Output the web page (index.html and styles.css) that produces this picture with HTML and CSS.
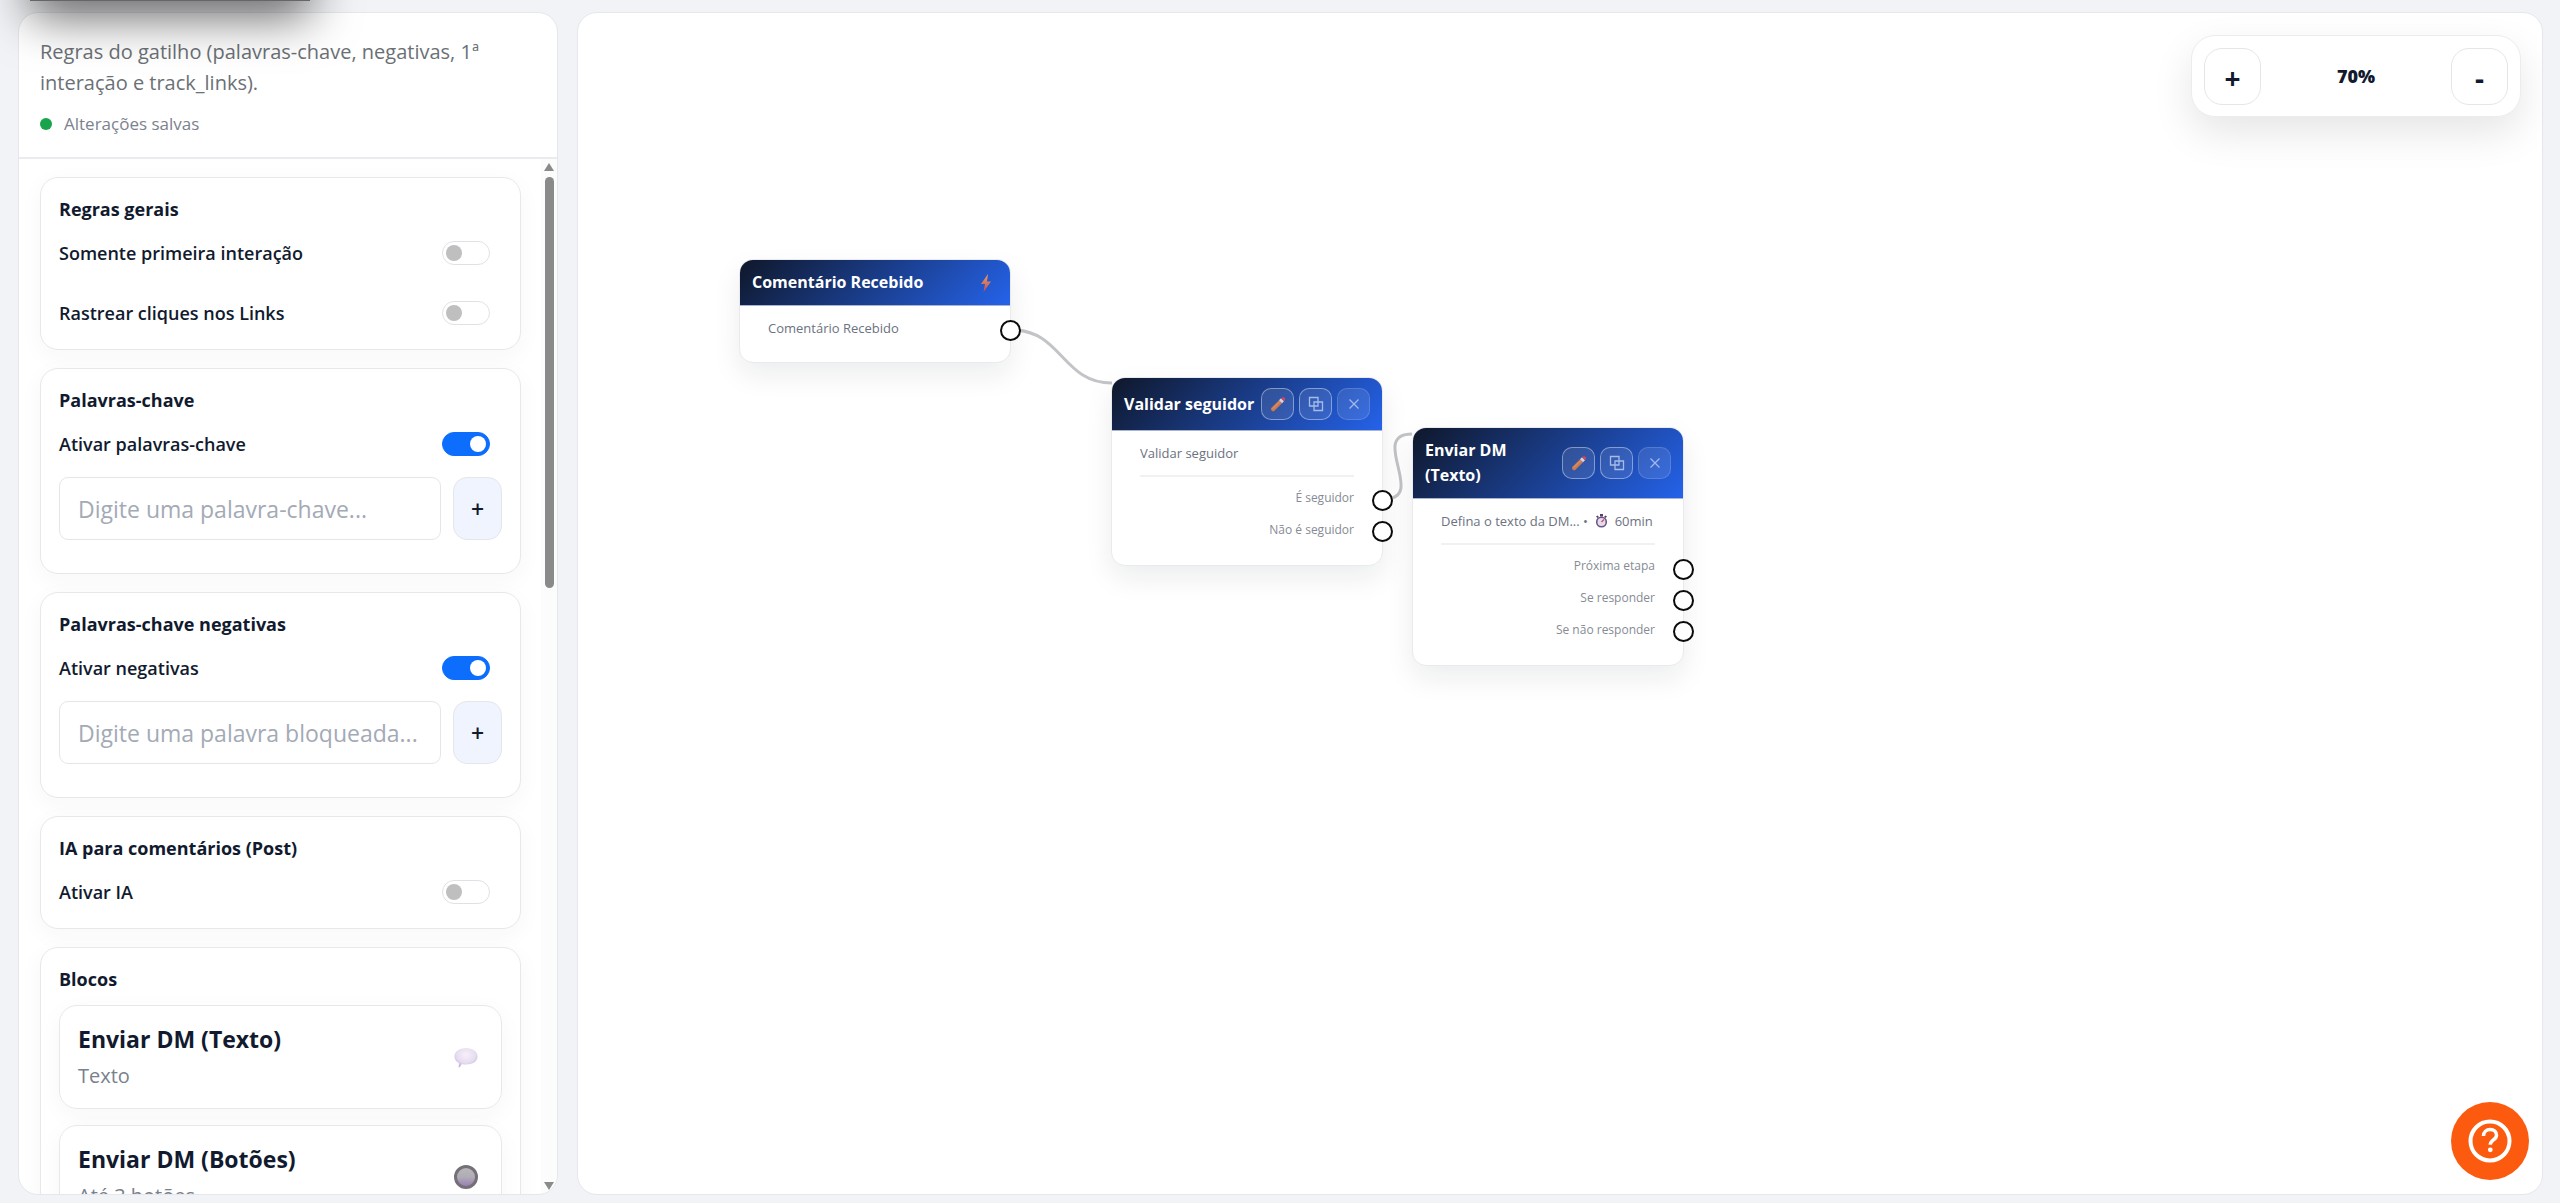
FILE: index.html
```html
<!DOCTYPE html>
<html lang="pt-BR">
<head>
<meta charset="utf-8">
<title>Editor de fluxo</title>
<link rel="stylesheet" href="styles.css">
</head>
<body>
<svg class="defs" aria-hidden="true">
  <defs>
    <linearGradient id="bolt" x1="0" y1="0" x2="0" y2="1"><stop offset="0" stop-color="#e9a25c"/><stop offset="1" stop-color="#c04a62"/></linearGradient>
    <radialGradient id="bubble" cx=".5" cy=".35" r=".7"><stop offset="0" stop-color="#f6f0fa"/><stop offset=".6" stop-color="#e6dcf0"/><stop offset="1" stop-color="#b9a2dc"/></radialGradient>
    <linearGradient id="disc" x1="0" y1="0" x2="0" y2="1"><stop offset="0" stop-color="#b9b8bb"/><stop offset=".5" stop-color="#b0acb5"/><stop offset="1" stop-color="#9678b4"/></linearGradient>
    <symbol id="i-pencil" viewBox="0 0 16 16"><path d="M1.200 12L9 4.200l3 3L4.200 15q-1.400 1-2.600-.4t-.4-2.600z" fill="#cc7a50"/><path d="M2.600 12.800L10 5.400" stroke="#e39a6c" stroke-width="1"/><path d="M9 4.200L11 2.200l3 3-2 2z" fill="#d5d3e6"/><path d="M11 2.200q1.800-1.800 3.500-.5T14 5.200z" fill="#d2475c"/></symbol>
    <symbol id="i-copy" viewBox="0 0 16 16"><path d="M1.500 1.500h8.500v8.500h-8.500zM6 6h8.500v8.500H6z" fill="none" stroke="#a9bbe6" stroke-width="1.300"/></symbol>
    <symbol id="i-close" viewBox="0 0 12 12"><path d="M1.500 1.500l9 9M10.500 1.500l-9 9" fill="none" stroke="#a3b9ee" stroke-width="1.300"/></symbol>
  </defs>
</svg>
<div class="app">
  <aside class="sidebar">
    <header class="side-head">
      <p class="intro">Regras do gatilho (palavras-chave, negativas, 1ª interação e track_links).</p>
      <p class="status"><span class="dot"></span>Alterações salvas</p>
    </header>
    <div class="side-body">
      <div class="sections">
        <section class="card">
          <h2>Regras gerais</h2>
          <div class="row"><label for="s1">Somente primeira interação</label><input class="switch" type="checkbox" id="s1"></div>
          <div class="row next"><label for="s2">Rastrear cliques nos Links</label><input class="switch" type="checkbox" id="s2"></div>
        </section>
        <section class="card with-input">
          <h2>Palavras-chave</h2>
          <div class="row"><label for="s3">Ativar palavras-chave</label><input class="switch" type="checkbox" id="s3" checked></div>
          <div class="add"><input type="text" aria-label="Palavra-chave" placeholder="Digite uma palavra-chave..."><button type="button">+</button></div>
        </section>
        <section class="card with-input">
          <h2>Palavras-chave negativas</h2>
          <div class="row"><label for="s4">Ativar negativas</label><input class="switch" type="checkbox" id="s4" checked></div>
          <div class="add"><input type="text" aria-label="Palavra bloqueada" placeholder="Digite uma palavra bloqueada..."><button type="button">+</button></div>
        </section>
        <section class="card">
          <h2>IA para comentários (Post)</h2>
          <div class="row"><label for="s5">Ativar IA</label><input class="switch" type="checkbox" id="s5"></div>
        </section>
        <section class="card blocks">
          <h2>Blocos</h2>
          <div class="block">
            <div><h3>Enviar DM (Texto)</h3><p>Texto</p></div>
            <svg width="24" height="24" viewBox="0 0 24 24"><path d="M12 3c6.500 0 11.500 3.500 11.500 8.500S18.500 19.500 12 19.500c-1.500 0-3 0-4-.5-1 1.500-2 3-3.500 3.500.5-1.500.5-3 .3-4.500C2 16.500.5 14 .5 11.500.5 6.500 5.500 3 12 3z" fill="url(#bubble)"/></svg>
          </div>
          <div class="block">
            <div><h3>Enviar DM (Botões)</h3><p>Até 3 botões</p></div>
            <svg width="24" height="24" viewBox="0 0 24 24"><circle cx="12" cy="12" r="10.500" fill="url(#disc)" stroke="#757078" stroke-width="3"/></svg>
          </div>
        </section>
      </div>
      <div class="scrollbar" aria-hidden="true">
        <svg width="10" height="8" viewBox="0 0 10 8"><path d="M5 0l5 8H0z" fill="#8a8a8a"/></svg>
        <span class="thumb"></span>
        <svg class="down" width="10" height="8" viewBox="0 0 10 8"><path d="M5 8l5-8H0z" fill="#8a8a8a"/></svg>
      </div>
    </div>
  </aside>
  <main class="canvas">
    <svg class="wires" aria-hidden="true"><path d="M434 317C484 317 484 370 534 370M806 486C850 486 790 421 834 421" fill="none" stroke="#c2c4c8" stroke-width="3"/></svg>

    <article class="node n1">
      <header><h4>Comentário Recebido</h4><svg class="bolt" width="12" height="18" viewBox="0 0 12 18"><path d="M8 0L1 10h4L3.500 18 11 7.500H7z" fill="url(#bolt)"/></svg></header>
      <div class="body"><p>Comentário Recebido</p></div>
      <span class="port"></span>
    </article>

    <article class="node n2">
      <header><h4>Validar seguidor</h4>
        <div class="tools">
          <button type="button" aria-label="Editar"><svg width="16" height="16"><use href="#i-pencil"/></svg></button>
          <button type="button" aria-label="Duplicar"><svg width="16" height="16"><use href="#i-copy"/></svg></button>
          <button type="button" aria-label="Excluir" class="dim"><svg width="12" height="12"><use href="#i-close"/></svg></button>
        </div>
      </header>
      <div class="body"><p>Validar seguidor</p>
        <ul><li>É seguidor</li><li>Não é seguidor</li></ul>
      </div>
      <span class="port"></span><span class="port p2"></span>
    </article>

    <article class="node n3">
      <header><h4>Enviar DM (Texto)</h4>
        <div class="tools">
          <button type="button" aria-label="Editar"><svg width="16" height="16"><use href="#i-pencil"/></svg></button>
          <button type="button" aria-label="Duplicar"><svg width="16" height="16"><use href="#i-copy"/></svg></button>
          <button type="button" aria-label="Excluir" class="dim"><svg width="12" height="12"><use href="#i-close"/></svg></button>
        </div>
      </header>
      <div class="body"><p>Defina o texto da DM... • <svg class="timer" width="13" height="14" viewBox="0 0 13 14"><path d="M5 0h3v2.500H5zM1 2.500l1.500-1L4 3 2.500 4zM12 2.500l-1.500-1L9 3l1.500 1z" fill="#54406e"/><circle cx="6.500" cy="8" r="4.800" fill="#e4dcec" stroke="#6b5585" stroke-width="1.600"/><path d="M6.500 8L9 5.500" stroke="#d0436a" stroke-width="1.300"/></svg> 60min</p>
        <ul><li>Próxima etapa</li><li>Se responder</li><li>Se não responder</li></ul>
      </div>
      <span class="port"></span><span class="port p2"></span><span class="port p3"></span>
    </article>

    <div class="zoom"><button type="button" aria-label="Aumentar zoom">+</button><output>70%</output><button type="button" aria-label="Diminuir zoom">-</button></div>
  </main>
</div>
<button type="button" class="help" aria-label="Ajuda"><svg width="44" height="44" viewBox="0 0 44 44" fill="none" stroke="#fff"><circle cx="22" cy="22" r="19.500" stroke-width="4"/><path d="M15.500 17c0-4 3-6.500 6.700-6.500s6.300 2.300 6.300 5.700c0 4.800-6.200 4.600-6.200 9.500" stroke-width="3.500"/><circle cx="22.300" cy="30.800" r="2.400" fill="#fff" stroke="none"/></svg></button>
<div class="overhang"></div>
</body>
</html>
```
FILE: styles.css
```css
* { box-sizing: border-box; }
body, h2, h3, h4, p, ul { margin: 0; padding: 0; }
body { font-family: "Open Sans", "Noto Sans", sans-serif; color: #111a2e; background: #f2f3f6; overflow: hidden; }
button, input { font: inherit; color: inherit; margin: 0; }
ul { list-style: none; }
svg { display: block; flex: none; }
.defs { position: absolute; width: 0; height: 0; }

.app { display: flex; gap: 19px; height: 100vh; padding: 12px 17px 8px 18px; }
.sidebar, .canvas { background: #fff; border: 1px solid #e5e7eb; border-radius: 20px; overflow: hidden; }
.sidebar { flex: none; width: 540px; display: flex; flex-direction: column; }
.canvas { flex: 1; position: relative; }

.side-head { flex: none; padding: 23px 21px 17px; border-bottom: 2px solid #eaebee; }
.intro { font-size: 20px; line-height: 31px; color: #6b7075; }
.status { display: flex; align-items: center; gap: 12px; margin-top: 10px; font-size: 17px; line-height: 32px; color: #7c828d; }
.dot { width: 12px; height: 12px; border-radius: 50%; background: #18a34c; }

.side-body { flex: 1; min-height: 0; display: flex; }
.sections { flex: 1; min-width: 0; padding: 18px 20px 0 21px; overflow: hidden; }
.card { margin-bottom: 18px; padding: 15px 18px 20px; background: #fff; border: 1px solid #e6e8ec; border-radius: 18px; box-shadow: 0 6px 24px rgba(15, 40, 30, .04); }
.card.with-input { padding-bottom: 33px; }
.card h2 { font-size: 18px; line-height: 32px; font-weight: 700; }
.row { display: flex; align-items: center; justify-content: space-between; margin-top: 12px; padding-right: 12px; height: 32px; font-size: 18px; font-weight: 600; }
.row.next { margin-top: 28px; }
.switch { appearance: none; display: flex; align-items: center; width: 48px; height: 24px; padding: 0 3px; border: 1px solid #dee2e6; border-radius: 12px; background: #fff; }
.switch::before { content: ""; width: 16px; height: 16px; border-radius: 50%; background: #bfbfbf; }
.switch:checked { justify-content: flex-end; background: #0d6efd; border-color: #0d6efd; }
.switch:checked::before { background: #fff; }
.add { display: flex; gap: 12px; height: 63px; margin-top: 17px; }
.add input { flex: 1; min-width: 0; padding: 0 18px; border: 1px solid #e4e6ea; border-radius: 9px; background: #fff; font-size: 23px; }
.add input::placeholder { color: #a3aab6; opacity: 1; }
.add button { width: 49px; border: 1px solid #e4e6ea; border-radius: 14px; background: #f0f4fe; font-size: 23px; font-weight: 600; padding: 0; }
.card.blocks { padding-bottom: 0; }
.block { display: flex; align-items: center; justify-content: space-between; height: 104px; margin: 10px 0 16px; padding: 0 23px 0 18px; border: 1px solid #e6e8ec; border-radius: 18px; box-shadow: 0 6px 24px rgba(15, 40, 30, .04); }
.block h3 { font-size: 23px; line-height: 38px; font-weight: 700; }
.block p { font-size: 20px; line-height: 36px; color: #7a808c; }

.scrollbar { flex: none; width: 16px; padding: 4px 3px; display: flex; flex-direction: column; align-items: center; background: #fcfcfc; }
.thumb { width: 9px; height: 411px; margin-top: 6px; border-radius: 5px; background: #8a8a8a; }
.down { margin-top: auto; }

.wires { position: absolute; inset: 0; width: 100%; height: 100%; }
.node { position: absolute; width: 272px; background: #fff; border: 1px solid #e8eaed; border-radius: 14px; box-shadow: 0 12px 28px rgba(15, 23, 42, .08); }
.n1 { left: 161px; top: 246px; }
.n2 { left: 533px; top: 364px; }
.n3 { left: 834px; top: 414px; }
.node header { display: flex; align-items: center; justify-content: space-between; padding: 10px 12px; border-bottom: 1px solid #a9b5d0; border-radius: 13px 13px 0 0; background: linear-gradient(135deg, #0f172a, #2563eb); background-origin: border-box; color: #fff; }
.node h4 { font-size: 16px; line-height: 25px; font-weight: 700; }
.bolt { margin-right: 6px; }
.tools { display: flex; gap: 5px; }
.tools button { display: flex; align-items: center; justify-content: center; width: 33px; height: 32px; padding: 0; border: 1px solid rgba(255, 255, 255, .4); border-radius: 10px; background: rgba(255, 255, 255, .1); }
.tools .dim { border-color: rgba(255, 255, 255, .15); }
.body { padding: 10px 28px 19px; }
.body p { font-size: 13px; line-height: 24px; color: #6b7280; white-space: nowrap; }
.n1 .body { padding-bottom: 22px; }
.timer { display: inline-block; margin: 0 3px 0 4px; vertical-align: -2px; }
.body ul { margin-top: 10px; padding-top: 5px; border-top: 2px solid #f0f1f3; font-size: 12px; line-height: 32px; text-align: right; color: #868b95; }
.port { position: absolute; right: -11px; top: 60px; width: 21px; height: 21px; border: 2px solid #0b0b0b; border-radius: 50%; background: #fff; }
.n2 .port { top: 112px; }
.n2 .p2 { top: 143px; }
.n3 .port { top: 131px; }
.n3 .p2 { top: 162px; }
.n3 .p3 { top: 193px; }

.zoom { position: absolute; top: 22px; right: 21px; display: flex; align-items: center; justify-content: space-between; width: 330px; height: 82px; padding: 0 12px; border: 1px solid #ececee; border-radius: 24px; background: #fff; box-shadow: 0 16px 40px rgba(0, 0, 0, .1); font-size: 18px; font-weight: 800; }
.zoom button { width: 57px; height: 57px; padding: 4px 0 0; border: 1px solid #e6e6e8; border-radius: 18px; background: #fff; font-size: 28px; line-height: 32px; font-weight: 700; }
.help { position: fixed; right: 31px; bottom: 23px; display: flex; align-items: center; justify-content: center; width: 78px; height: 78px; padding: 0; border: 0; border-radius: 50%; background: #fc5b0f; }
.overhang { position: fixed; left: 30px; top: -60px; width: 280px; height: 61px; background: #666; box-shadow: 0 16px 48px rgba(0, 0, 0, .6); }
```
